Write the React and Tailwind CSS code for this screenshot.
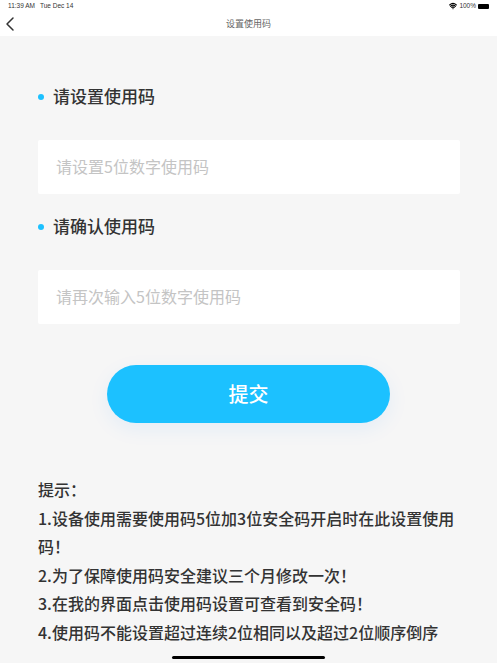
import React from "react";
import { ChevronLeft, Wifi } from "lucide-react";

const font = "font-['Noto_Sans_CJK_SC','Noto_Sans',sans-serif]";

const hints = [
  "1.设备使用需要使用码5位加3位安全码开启时在此设置使用码！",
  "2.为了保障使用码安全建议三个月修改一次！",
  "3.在我的界面点击使用码设置可查看到安全码！",
  "4.使用码不能设置超过连续2位相同以及超过2位顺序倒序",
];

function Field({ label, placeholder }) {
  return (
    <div>
      <div className="flex items-center h-[26px]">
        <span className="w-[6px] h-[6px] rounded-full bg-[#1cc1ff]" />
        <span className="ml-[9px] text-[17px] leading-[24px] pb-[2px] font-medium text-[#333333]">{label}</span>
      </div>
      <div className="mt-[30px] h-[54px] rounded-[2px] bg-white flex items-center pl-[18px] pb-[2px] text-[16px] text-[#c4c4c4]">
        {placeholder}
      </div>
    </div>
  );
}

export default function App() {
  return (
    <div className={`relative w-[497px] h-[663px] overflow-hidden bg-[#f6f6f6] ${font}`}>
      <div className="bg-white h-[36px]">
        <div className="h-[12px] flex items-center justify-between pl-[8px] pr-[8px] font-['Liberation_Sans',sans-serif] text-[6.5px] text-[#333333]">
          <div className="flex gap-[5px]">
            <span>11:39 AM</span>
            <span>Tue Dec 14</span>
          </div>
          <div className="flex items-center gap-[2px]">
            <Wifi className="w-[8px] h-[8px] text-black" strokeWidth={3.5} />
            <span>100%</span>
            <div className="w-[11px] h-[5px] rounded-[1px] bg-black" />
          </div>
        </div>
        <div className="relative h-[24px] flex items-center justify-center text-[9px] text-[#666666]">
          <ChevronLeft className="absolute left-[-2px] top-0 w-[24px] h-[24px] text-[#333333]" strokeWidth={1.5} />
          设置使用码
        </div>
      </div>

      <div className="pt-[48px] pl-[38px] pr-[37px] flex flex-col gap-[20px]">
        <Field label="请设置使用码" placeholder="请设置5位数字使用码" />
        <Field label="请确认使用码" placeholder="请再次输入5位数字使用码" />
      </div>

      <div className="flex justify-center mt-[41px]">
        <button className="w-[283px] h-[58px] rounded-full bg-[#1cc1ff] text-white text-[20px] font-medium shadow-[0_6px_20px_rgba(28,130,255,0.08)]">
          提交
        </button>
      </div>

      <div className="mt-[52px] pl-[38px] pr-[36px] text-[16px] leading-[28.5px] font-medium text-[#333333]">
        <div>提示：</div>
        {hints.map((hint) => (
          <div key={hint}>{hint}</div>
        ))}
      </div>

      <div className="absolute left-[172px] bottom-[4px] w-[153px] h-[3px] rounded-full bg-black" />
    </div>
  );
}
